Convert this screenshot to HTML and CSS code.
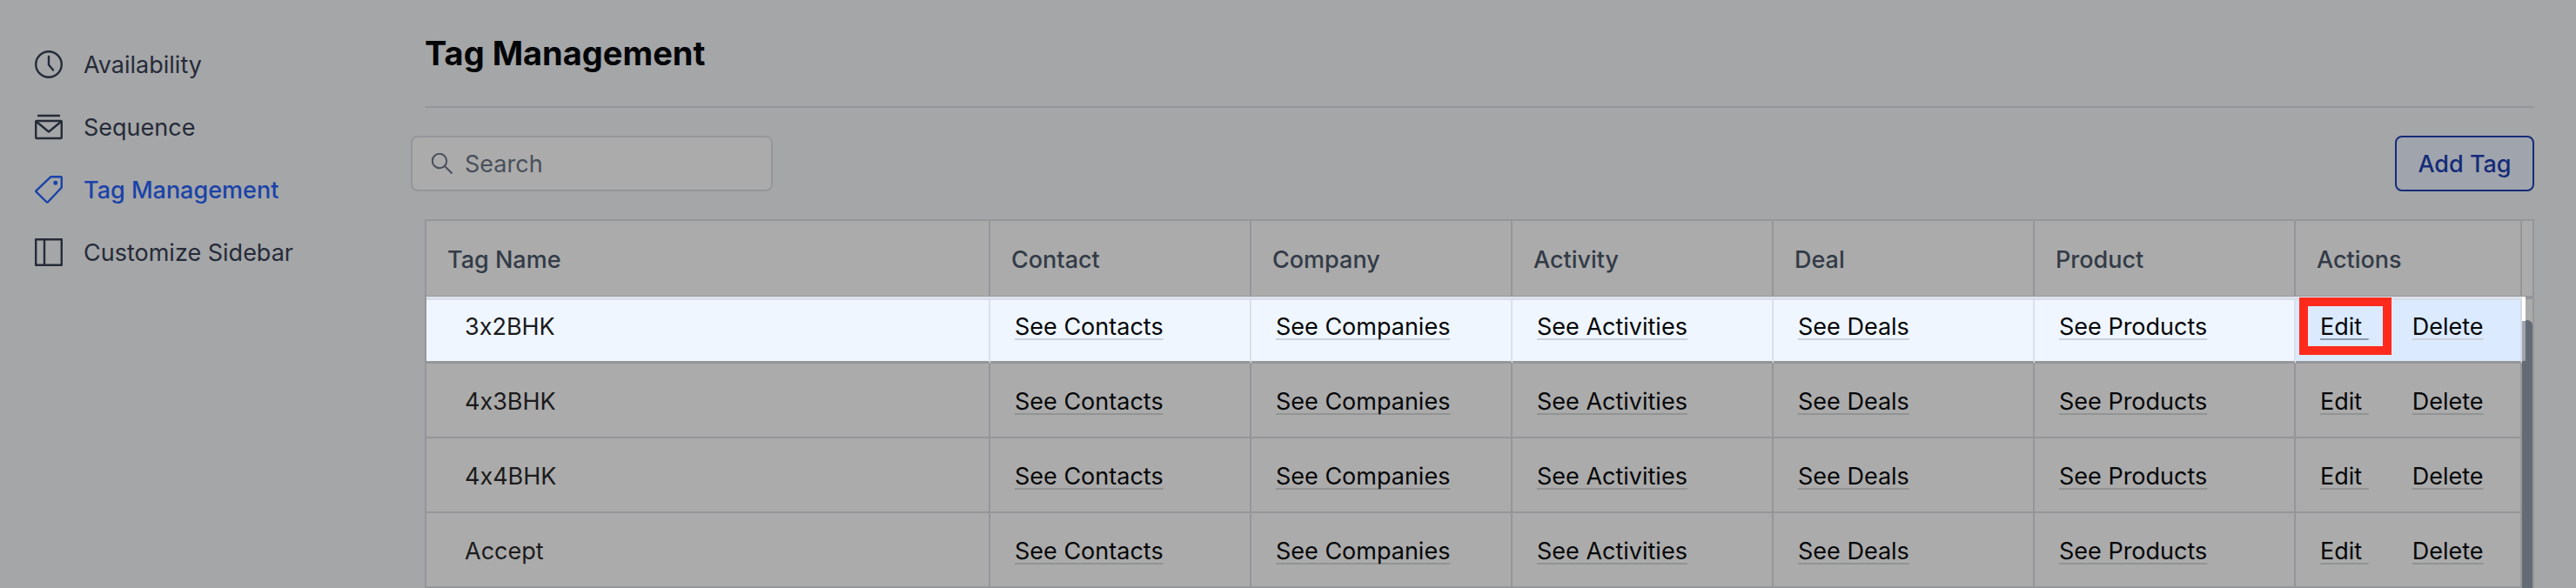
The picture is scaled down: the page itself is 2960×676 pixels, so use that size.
FILE: index.html
```html
<!DOCTYPE html>
<html lang="en">

<head>
  <meta charset="utf-8">
  <title>Tag Management</title>
  <link rel="stylesheet" href="styles.css">
</head>

<body>
  <div class="page">
    <nav class="sidebar">
      <a class="nav-item" href="#availability">
        <svg class="nav-icon" viewBox="0 0 32 32">
          <circle cx="16" cy="16" r="14.800" />
          <path d="M16 7v9.500l5 6" />
        </svg>
        <span>Availability</span>
      </a>
      <a class="nav-item" href="#sequence">
        <svg class="nav-icon" viewBox="0 0 32 32">
          <path d="M4 3h24" />
          <rect x="1.200" y="9" width="29.600" height="20" rx="1" />
          <path d="M2 10l14 11.500L30 10" />
        </svg>
        <span>Sequence</span>
      </a>
      <a class="nav-item active" href="#tags">
        <svg class="nav-icon" viewBox="0 0 32 32">
          <path d="M18.500 1.200H30q.8 0 .8 1v11.300L15.300 30q-1 1-2 0L1.700 18.700q-.8-.8 0-1.600z" />
          <rect x="22.500" y="7" width="2.500" height="2.500" rx="1" />
        </svg>
        <span>Tag Management</span>
      </a>
      <a class="nav-item" href="#customize">
        <svg class="nav-icon" viewBox="0 0 32 32">
          <rect x="1.200" y="1.200" width="29.600" height="29.600" />
          <path d="M11 1v30" />
        </svg>
        <span>Customize Sidebar</span>
      </a>
    </nav>

    <main class="content">
      <h1>Tag Management</h1>

      <div class="toolbar">
        <label class="search">
          <svg class="search-icon" viewBox="0 0 24 24">
            <circle cx="9" cy="9" r="8.200" />
            <path d="M15 15l8.500 8.500" />
          </svg>
          <input type="text" placeholder="Search" aria-label="Search">
        </label>
        <button class="add-button" type="button">Add Tag</button>
      </div>

      <table class="tags">
        <colgroup>
          <col>
          <col class="col-link" span="5">
          <col class="col-actions">
          <col class="col-scroll">
        </colgroup>
        <thead>
          <tr>
            <th>Tag Name</th>
            <th>Contact</th>
            <th>Company</th>
            <th>Activity</th>
            <th>Deal</th>
            <th>Product</th>
            <th>Actions</th>
            <th class="scroll-head"></th>
          </tr>
        </thead>
        <tbody>
          <tr class="selected">
            <td class="name">3x2BHK</td>
            <td><a href="#">See Contacts</a></td>
            <td><a href="#">See Companies</a></td>
            <td><a href="#">See Activities</a></td>
            <td><a href="#">See Deals</a></td>
            <td><a href="#">See Products</a></td>
            <td class="actions"><a class="edit" href="#">Edit&nbsp;</a><a href="#">Delete</a><span class="marker"></span></td>
            <td class="scroll" rowspan="4"><div class="thumb"></div><div class="glow"></div></td>
          </tr>
          <tr>
            <td class="name">4x3BHK</td>
            <td><a href="#">See Contacts</a></td>
            <td><a href="#">See Companies</a></td>
            <td><a href="#">See Activities</a></td>
            <td><a href="#">See Deals</a></td>
            <td><a href="#">See Products</a></td>
            <td class="actions"><a class="edit" href="#">Edit&nbsp;</a><a href="#">Delete</a></td>
          </tr>
          <tr>
            <td class="name">4x4BHK</td>
            <td><a href="#">See Contacts</a></td>
            <td><a href="#">See Companies</a></td>
            <td><a href="#">See Activities</a></td>
            <td><a href="#">See Deals</a></td>
            <td><a href="#">See Products</a></td>
            <td class="actions"><a class="edit" href="#">Edit&nbsp;</a><a href="#">Delete</a></td>
          </tr>
          <tr>
            <td class="name">Accept</td>
            <td><a href="#">See Contacts</a></td>
            <td><a href="#">See Companies</a></td>
            <td><a href="#">See Activities</a></td>
            <td><a href="#">See Deals</a></td>
            <td><a href="#">See Products</a></td>
            <td class="actions"><a class="edit" href="#">Edit&nbsp;</a><a href="#">Delete</a></td>
          </tr>
        </tbody>
      </table>
    </main>
  </div>
</body>

</html>
```
FILE: styles.css
```css
* {
  box-sizing: border-box;
}

body {
  margin: 0;
  background: #a5a6a8;
  color: #1b1b1c;
  font-family: Inter, "Liberation Sans", sans-serif;
  font-size: 27px;
  line-height: 36px;
  /* keep the "x" in names like 3x2BHK a letter */
  font-feature-settings: "calt" 0;
}

.page {
  display: flex;
}

/* left menu */
.sidebar {
  width: 472px;
  flex-shrink: 0;
  padding: 38px 40px 0;
}

.nav-item {
  display: flex;
  align-items: center;
  gap: 24px;
  height: 72px;
  color: #252b38;
  text-decoration: none;
}

.nav-item span {
  padding-top: 2px;
}

.nav-item.active {
  color: #1a43a8;
  font-weight: 500;
}

.nav-icon {
  width: 32px;
  height: 32px;
  fill: none;
  stroke: currentColor;
  stroke-width: 2.4;
  stroke-linecap: round;
  stroke-linejoin: round;
}

.content {
  flex: 1;
  padding: 0 48px 0 16px;
}

h1 {
  margin: 0;
  height: 124px;
  padding-top: 37px;
  border-bottom: 2px solid #959699;
  color: #030507;
  font-size: 38px;
  font-weight: 700;
  line-height: 48px;
}

.toolbar {
  display: flex;
  justify-content: space-between;
  margin: 32px 0 32px -16px;
}

.search {
  display: flex;
  align-items: center;
  gap: 14px;
  width: 416px;
  height: 64px;
  padding: 0 22px;
  background: #ababab;
  border: 2px solid #959699;
  border-radius: 8px;
}

.search-icon {
  width: 24px;
  height: 24px;
  flex-shrink: 0;
  fill: none;
  stroke: #494f5b;
  stroke-width: 2;
}

.search input {
  width: 100%;
  padding: 2px 0 0;
  border: none;
  outline: none;
  background: none;
  font: inherit;
  color: #1b1b1c;
}

.search input::placeholder {
  color: #494f5b;
  opacity: 1;
}

.add-button {
  width: 160px;
  height: 64px;
  padding: 2px 0 0;
  background: #a0a5ad;
  border: 2px solid #152b78;
  border-radius: 8px;
  color: #152b78;
  font: inherit;
  font-weight: 500;
  cursor: pointer;
}

/* tags table */
.tags {
  width: 100%;
  table-layout: fixed;
  border-collapse: separate;
  border-spacing: 0;
  border: 2px solid #959699;
  border-bottom: none;
  background: #ababab;
}

.col-link {
  width: 300px;
}

.col-actions {
  width: 260px;
}

.col-scroll {
  width: 12px;
}

.tags th {
  height: 90px;
  padding: 4px 24px 0;
  border-right: 2px solid #959699;
  border-bottom: 4px solid #959699;
  color: #333b47;
  font-weight: 500;
  text-align: left;
}

.tags td {
  height: 86px;
  padding: 3px 28px 0;
  border-right: 2px solid #959699;
  border-bottom: 2px solid #959699;
}

.tags td.name {
  padding-left: 44px;
}

.tags a {
  color: #050608;
  text-decoration: underline 2px #929394;
  text-decoration-skip-ink: none;
  text-underline-offset: 4px;
}

.tags .edit {
  margin-right: 50px;
}

/* the first row is scrolled partly under the header */
.tags .selected td {
  position: relative;
  height: 74px;
  padding-bottom: 11px;
  background: #eff6ff;
  border-right-color: #dbe0e9;
  border-bottom-width: 3px;
}

.tags .selected td.actions {
  background: #dbeafe;
  border-right-color: #d4dae2;
}

.tags .selected a {
  text-decoration-color: #cbd2dc;
}

.tags .selected .edit {
  text-decoration-color: #8f9bab;
}

.tags .selected td:not(.scroll)::before {
  content: "";
  position: absolute;
  top: -3px;
  left: 0;
  right: -2px;
  height: 3px;
  background: #d8dfea;
  border-top: 1px solid #e6ebf3;
}

.marker {
  position: absolute;
  top: -2px;
  left: 4px;
  width: 106px;
  height: 66px;
  border: 10px solid #fe2a1c;
}

.tags .scroll-head,
.tags .selected td.scroll {
  padding: 0;
  border-right: none;
}

.tags .selected td.scroll {
  background: #ababab;
  border-bottom: none;
}

.thumb {
  position: absolute;
  top: 24px;
  right: 0;
  bottom: 0;
  left: 0;
  background: #656b74;
  border-radius: 6px 6px 0 0;
}

/* light strip where the selected row runs under the scrollbar */
.glow {
  position: absolute;
  top: -3px;
  left: 0;
  width: 4px;
  height: 74px;
  background: linear-gradient(#fff 28px, #9da4b0 28px);
}
```
